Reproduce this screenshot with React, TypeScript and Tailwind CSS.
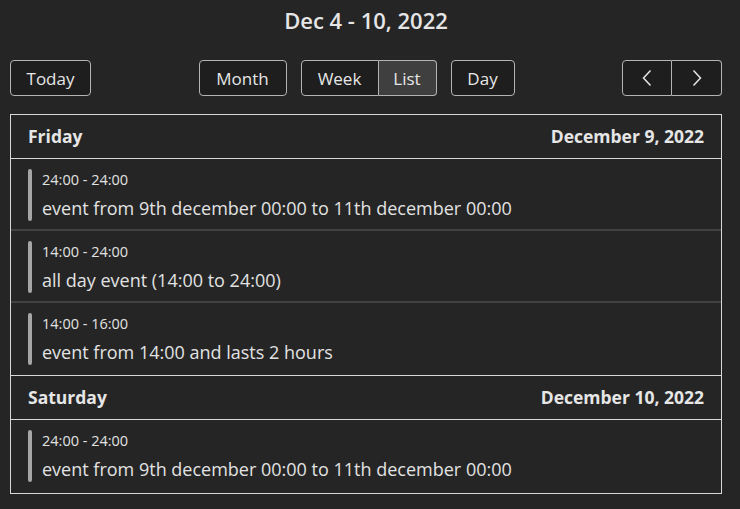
import { FC, ReactElement } from "react";

type CalEvent = { time: string; title: string };
type CalDay = { name: string; date: string; events: CalEvent[] };

const days: CalDay[] = [
  {
    name: "Friday",
    date: "December 9, 2022",
    events: [
      { time: "24:00 - 24:00", title: "event from 9th december 00:00 to 11th december 00:00" },
      { time: "14:00 - 24:00", title: "all day event (14:00 to 24:00)" },
      { time: "14:00 - 16:00", title: "event from 14:00 and lasts 2 hours" },
    ],
  },
  {
    name: "Saturday",
    date: "December 10, 2022",
    events: [{ time: "24:00 - 24:00", title: "event from 9th december 00:00 to 11th december 00:00" }],
  },
];

const btn =
  "h-[36px] border border-[#b4b4b4] bg-[#1e1e1e] text-[#e6e6e6] text-[17px] leading-none flex items-center justify-center";

const Chevron: FC<{ dir: "left" | "right" }> = ({ dir }) => (
  <svg width="12" height="20" viewBox="0 0 12 20" fill="none" stroke="#e6e6e6" strokeWidth="1.5">
    {dir === "left" ? <polyline points="9.5,2.5 2.5,10 9.5,17.5" /> : <polyline points="2.5,2.5 9.5,10 2.5,17.5" />}
  </svg>
);

const Toolbar: FC = (): ReactElement => (
  <div className="flex items-center justify-between mt-[29px]">
    <button className={`${btn} w-[81px] rounded-[4px]`}>Today</button>
    <div className="flex items-center gap-[14px]">
      <button className={`${btn} w-[88px] rounded-[4px]`}>Month</button>
      <div className="flex">
        <button className={`${btn} w-[78px] rounded-l-[4px]`}>Week</button>
        <button className={`${btn} w-[58px] rounded-r-[4px] border-l-0 bg-[#3f3f3f]`}>List</button>
      </div>
      <button className={`${btn} w-[64px] rounded-[4px]`}>Day</button>
    </div>
    <div className="flex">
      <button className={`${btn} w-[50px] rounded-l-[4px]`}>
        <Chevron dir="left" />
      </button>
      <button className={`${btn} w-[50px] rounded-r-[4px] border-l-0`}>
        <Chevron dir="right" />
      </button>
    </div>
  </div>
);

const EventRow: FC<{ ev: CalEvent; last: boolean }> = ({ ev, last }) => (
  <div className={`flex h-[72px] pl-[17px] pt-[10px] ${last ? "" : "border-b-2 border-[#414141]"}`}>
    <div className="w-[4px] h-[52px] rounded-full bg-[#a6a6a6]" />
    <div className="flex flex-col pl-[10px] pt-[1px]">
      <span className="text-[14.5px] leading-[20px] text-[#e2e2e2]">{ev.time}</span>
      <span className="text-[18px] leading-[36px] text-[#e2e2e2]">{ev.title}</span>
    </div>
  </div>
);

export default function App(): ReactElement {
  return (
    <div
      className="w-[740px] h-[509px] bg-[#252525] px-[10px] overflow-hidden"
      style={{ fontFamily: '"Segoe UI", "Open Sans", sans-serif' }}
    >
      <div className="w-[712px]">
        <h1 className="text-center text-[22px] font-semibold text-[#e6e6e6] leading-none pt-[9px]">
          Dec 4 - 10, 2022
        </h1>
        <Toolbar />
        <div className="mt-[18px] border border-[#d8d8d8]">
          {days.map((d, i) => (
            <div key={d.name} className={i > 0 ? "border-t border-[#d8d8d8]" : ""}>
              <div className="flex justify-between items-center h-[44px] px-[17px] border-b border-[#d8d8d8] font-bold text-[17.5px] text-[#e6e6e6]">
                <span>{d.name}</span>
                <span>{d.date}</span>
              </div>
              {d.events.map((ev, j) => (
                <EventRow key={j} ev={ev} last={j === d.events.length - 1} />
              ))}
            </div>
          ))}
          <div className="h-[1px]" />
        </div>
      </div>
    </div>
  );
}
